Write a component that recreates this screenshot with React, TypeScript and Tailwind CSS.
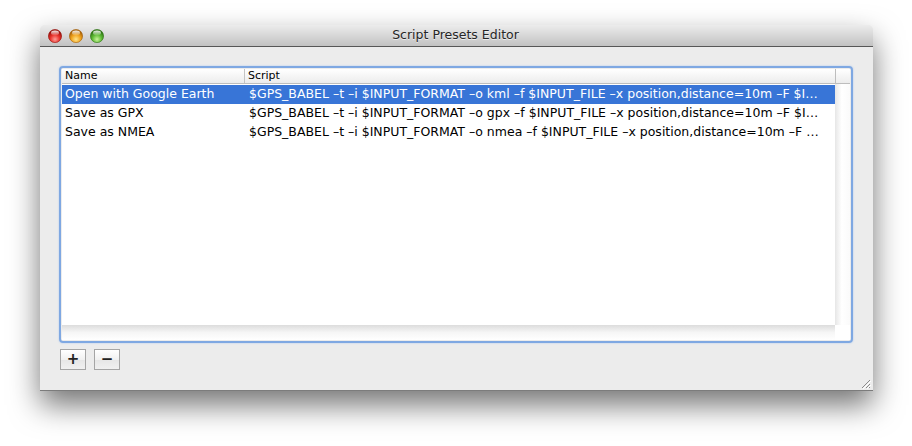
const presets = [
  {
    name: 'Open with Google Earth',
    script:
      '$GPS_BABEL –t –i $INPUT_FORMAT –o kml –f $INPUT_FILE –x position,distance=10m –F $I…',
  },
  {
    name: 'Save as GPX',
    script:
      '$GPS_BABEL –t –i $INPUT_FORMAT –o gpx –f $INPUT_FILE –x position,distance=10m –F $I…',
  },
  {
    name: 'Save as NMEA',
    script:
      '$GPS_BABEL –t –i $INPUT_FORMAT –o nmea –f $INPUT_FILE –x position,distance=10m –F …',
  },
]

function Light({ id, light, mid, dark }: { id: string; light: string; mid: string; dark: string }) {
  return (
    <svg width="14" height="14" viewBox="0 0 14 14">
      <defs>
        <radialGradient id={id} cx="50%" cy="75%" r="65%">
          <stop offset="0%" stopColor={light} />
          <stop offset="55%" stopColor={mid} />
          <stop offset="100%" stopColor={dark} />
        </radialGradient>
        <linearGradient id={id + 'h'} x1="0" y1="0" x2="0" y2="1">
          <stop offset="0%" stopColor="#fff" stopOpacity="0.9" />
          <stop offset="100%" stopColor="#fff" stopOpacity="0.1" />
        </linearGradient>
      </defs>
      <circle cx="7" cy="7" r="6.6" fill={`url(#${id})`} stroke={dark} strokeWidth="0.6" />
      <ellipse cx="7" cy="4" rx="4" ry="2.4" fill={`url(#${id}h)`} />
    </svg>
  )
}

function ResizeGrip() {
  return (
    <svg width="12" height="12" viewBox="0 0 12 12">
      <path d="M11 3 L3 11 M11 7 L7 11 M11 10 L10 11" stroke="#8a8a8a" strokeWidth="1" />
      <path d="M12 4 L4 12 M12 8 L8 12" stroke="#ffffff" strokeWidth="1" />
    </svg>
  )
}

export default function App() {
  return (
    <div className="h-[446px] w-[912px] overflow-hidden bg-white pl-[40px] pt-[25px] font-['DejaVu_Sans',sans-serif]">
      <div className="flex h-[366px] w-[833px] flex-col rounded-t-[5px] border-b border-[#7c7c7c] bg-[#ececec] shadow-[0_14px_30px_rgba(0,0,0,0.55)]">
        {/* title bar */}
        <div className="relative flex h-[22px] items-center rounded-t-[5px] border-b border-[#575757] bg-[linear-gradient(#ececec,#c2c2c2)] pl-[8px]">
          <div className="flex gap-[7px]">
            <Light id="r" light="#ff9c96" mid="#e8302a" dark="#96110c" />
            <Light id="y" light="#ffe58a" mid="#f0a21b" dark="#a4600a" />
            <Light id="g" light="#c8f59a" mid="#5dba34" dark="#2d7312" />
          </div>
          <div className="absolute inset-0 flex items-center justify-center pr-[2px] text-[12.5px] text-[#262626] [text-shadow:0_1px_0_rgba(255,255,255,0.6)]">
            Script Presets Editor
          </div>
        </div>

        {/* content */}
        <div className="flex flex-1 flex-col px-[19px] pt-[19px]">
          <div className="h-[277px] w-[794px] rounded-[4px] border-[2px] border-[#7fa8e2] p-[1px] shadow-[0_0_2px_#a9c6ee]">
            <div className="grid h-full grid-cols-[773px_1fr] grid-rows-[15px_1fr_15px] bg-white">
              {/* header */}
              <div className="flex border-b border-[#bdbdbd] bg-[linear-gradient(#ffffff,#ececec)] text-[11px] leading-[14px] text-black">
                <div className="w-[183px] border-r border-[#c4c4c4] pl-[3px]">Name</div>
                <div className="pl-[3px]">Script</div>
              </div>
              <div className="border-b border-l border-[#bdbdbd] bg-[linear-gradient(#ffffff,#ececec)]" />

              {/* rows */}
              <div className="pt-[1px] text-[12.5px]">
                {presets.map((p, i) => (
                  <div
                    key={p.name}
                    className={
                      i === 0
                        ? 'flex h-[19px] items-center bg-[#3875d7] text-white'
                        : 'flex h-[19px] items-center text-black'
                    }
                  >
                    <div className="w-[184px] whitespace-nowrap pl-[3px]">{p.name}</div>
                    <div className="flex-1 overflow-hidden whitespace-nowrap pl-[3px]">{p.script}</div>
                  </div>
                ))}
              </div>
              <div className="bg-[linear-gradient(90deg,#e6e6e6,#ffffff_45%,#fafafa)]" />

              {/* horizontal scroller */}
              <div className="bg-[linear-gradient(#dcdcdc,#f6f6f6_50%,#ffffff)]" />
              <div className="bg-white" />
            </div>
          </div>

          {/* buttons */}
          <div className="mt-[6px] flex gap-[8px] pl-[1px]">
            <button className="flex h-[21px] w-[26px] items-center justify-center border border-[#a5a5a5] bg-[linear-gradient(#ffffff,#f1f1f1_50%,#e6e6e6_51%,#f0f0f0)] text-[15px] font-bold leading-none text-[#222]">
              +
            </button>
            <button className="flex h-[21px] w-[26px] items-center justify-center border border-[#a5a5a5] bg-[linear-gradient(#ffffff,#f1f1f1_50%,#e6e6e6_51%,#f0f0f0)] text-[15px] font-bold leading-none text-[#222]">
              −
            </button>
          </div>

          <div className="mt-auto flex justify-end pb-[1px]">
            <div className="-mr-[17px]">
              <ResizeGrip />
            </div>
          </div>
        </div>
      </div>
    </div>
  )
}
